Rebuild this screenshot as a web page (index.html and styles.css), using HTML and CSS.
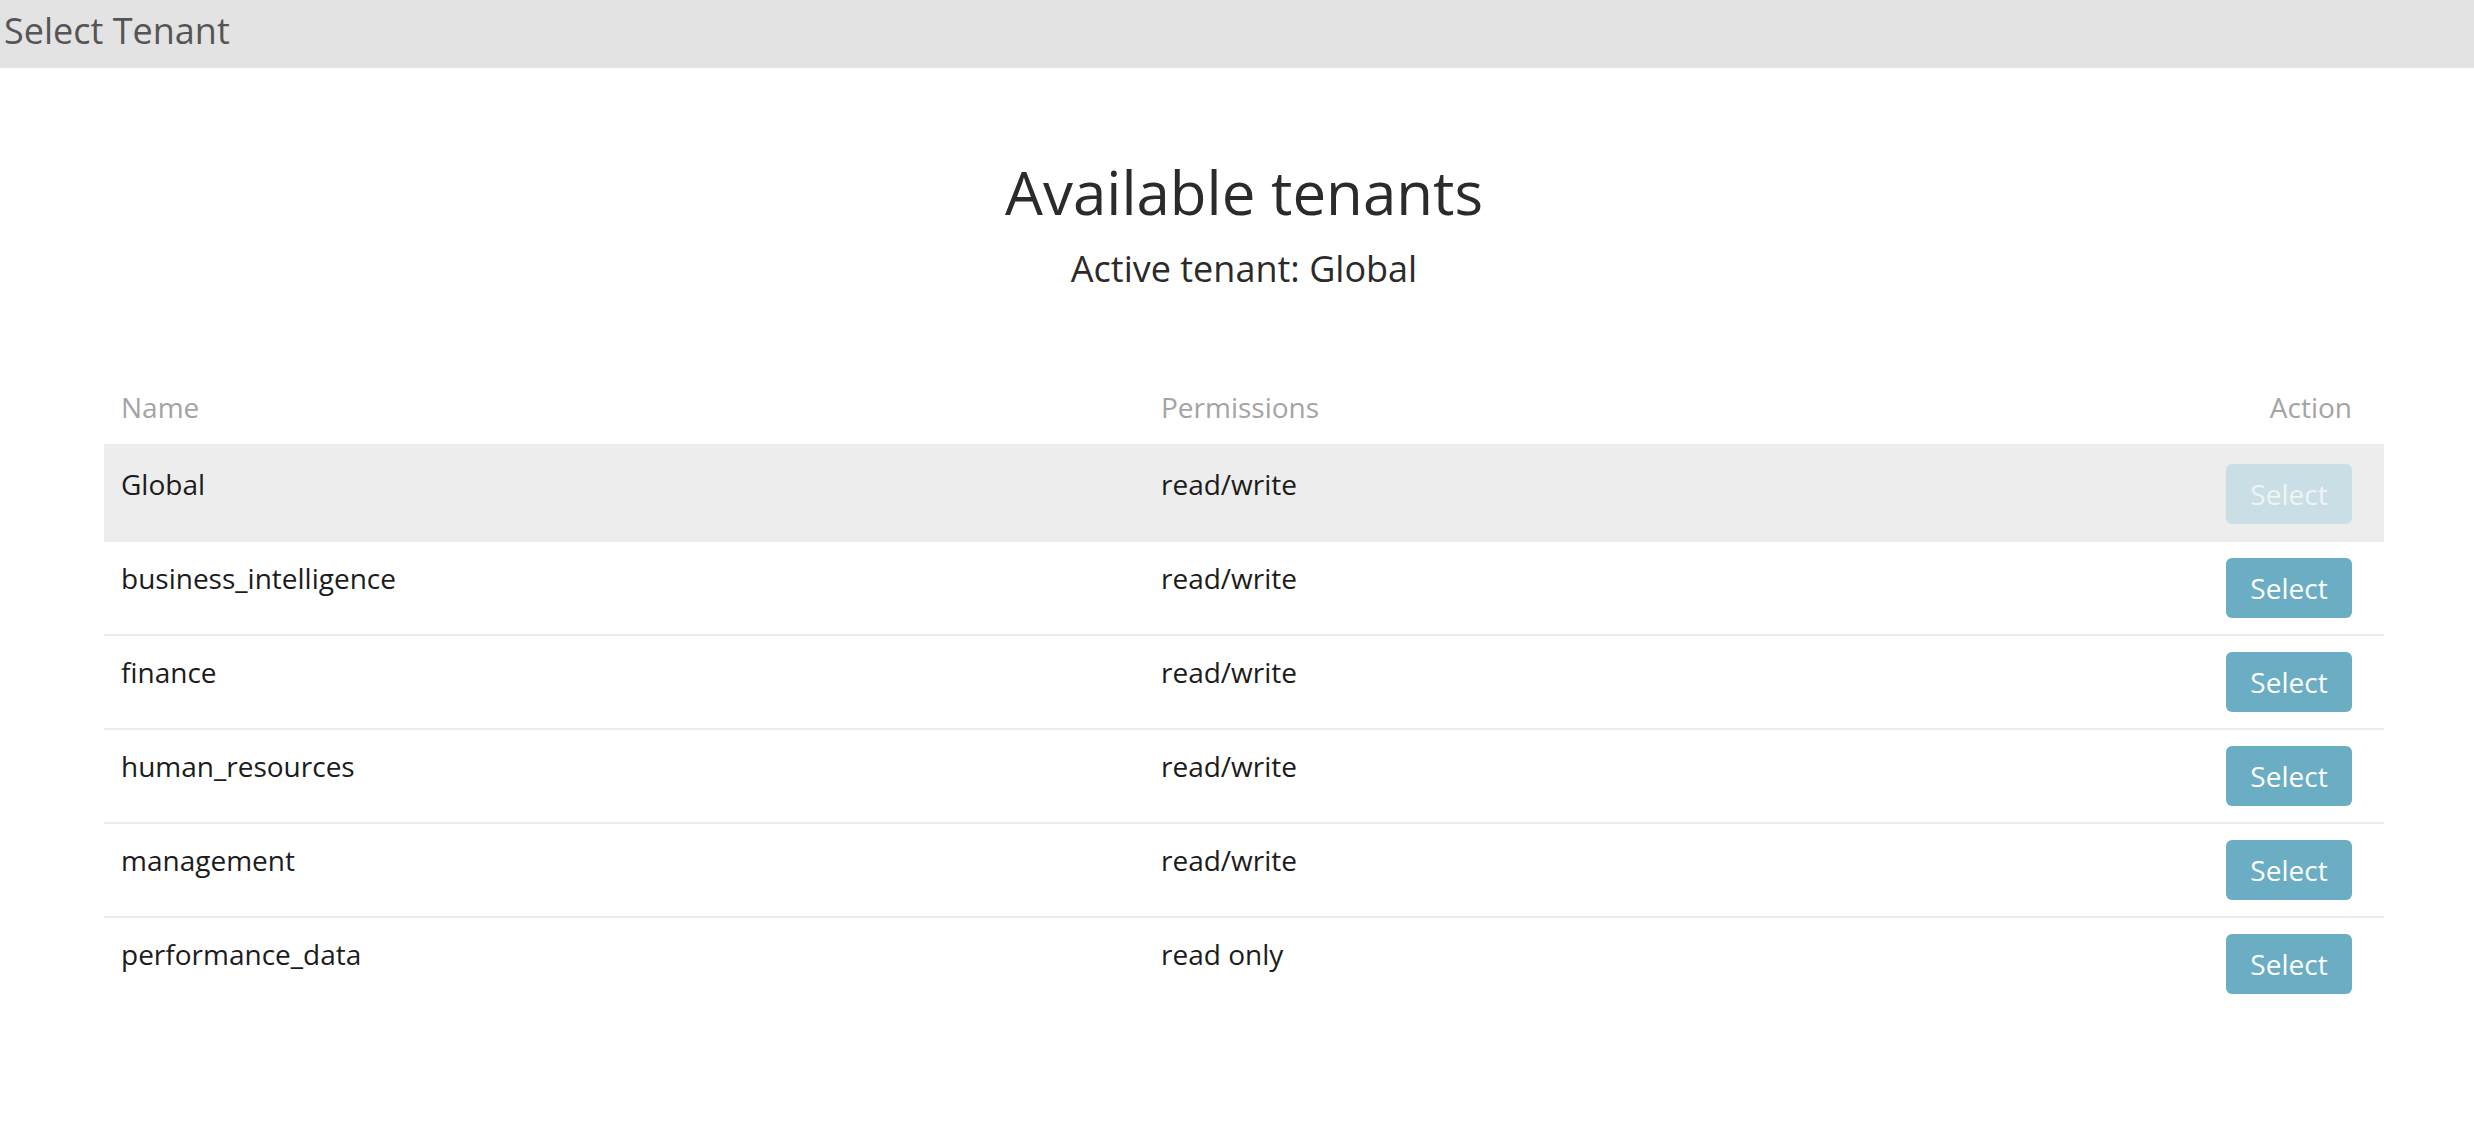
FILE: index.html
```html
<!DOCTYPE html>
<html lang="en">
<head>
<meta charset="utf-8">
<title>Select Tenant</title>
<link rel="stylesheet" href="styles.css">
</head>
<body>
<header class="topbar">
  <span class="topbar-title">Select Tenant</span>
</header>
<main class="content">
  <h1 class="page-title">Available tenants</h1>
  <h2 class="active-tenant">Active tenant: Global</h2>
  <table class="tenants">
    <thead>
      <tr>
        <th class="col-name">Name</th>
        <th class="col-perm">Permissions</th>
        <th class="col-action">Action</th>
      </tr>
    </thead>
    <tbody>
      <tr class="is-active">
        <td>Global</td>
        <td>read/write</td>
        <td class="col-action"><button class="btn btn-disabled" disabled>Select</button></td>
      </tr>
      <tr>
        <td>business_intelligence</td>
        <td>read/write</td>
        <td class="col-action"><button class="btn">Select</button></td>
      </tr>
      <tr>
        <td>finance</td>
        <td>read/write</td>
        <td class="col-action"><button class="btn">Select</button></td>
      </tr>
      <tr>
        <td>human_resources</td>
        <td>read/write</td>
        <td class="col-action"><button class="btn">Select</button></td>
      </tr>
      <tr>
        <td>management</td>
        <td>read/write</td>
        <td class="col-action"><button class="btn">Select</button></td>
      </tr>
      <tr class="last">
        <td>performance_data</td>
        <td>read only</td>
        <td class="col-action"><button class="btn">Select</button></td>
      </tr>
    </tbody>
  </table>
</main>
</body>
</html>
```
FILE: styles.css
```css
html, body {
  margin: 0;
  padding: 0;
  background: #ffffff;
  font-family: "Open Sans", "Noto Sans", sans-serif;
}

.topbar {
  height: 68px;
  background: #e3e3e3;
  padding-left: 4px;
  box-sizing: border-box;
}

.topbar-title {
  display: block;
  font-size: 36px;
  line-height: 62px;
  color: #555555;
}

.content {
  padding: 0 90px 0 104px;
}

.page-title {
  margin: 91px 0 0;
  text-align: center;
  font-size: 60px;
  line-height: 66px;
  font-weight: 400;
  color: #2b2b2b;
}

.active-tenant {
  margin: 24px 0 0;
  text-align: center;
  font-size: 36px;
  line-height: 40px;
  font-weight: 400;
  color: #2b2b2b;
}

.tenants {
  width: 100%;
  margin-top: 82px;
  border-collapse: collapse;
  font-size: 28px;
  line-height: 40px;
  color: #1c1c1c;
}

.tenants th {
  font-weight: 400;
  color: #a4a4a4;
  text-align: left;
  padding: 16px 17px 17px;
}

.tenants .col-name {
  width: 1006px;
}

.tenants th.col-action,
.tenants td.col-action {
  text-align: right;
  padding-right: 32px;
}

.tenants td {
  vertical-align: top;
  padding: 16px 17px;
}

.tenants tbody tr {
  border-bottom: 2px solid #ececec;
}

.tenants tbody tr.last {
  border-bottom: none;
}

.tenants tr.is-active {
  background: #ededed;
  border-bottom-color: #ededed;
}

.tenants tr.is-active td {
  padding-top: 20px;
}

.btn {
  display: inline-block;
  width: 126px;
  height: 60px;
  padding: 0;
  border: none;
  border-radius: 6px;
  background: #6badc2;
  color: #ffffff;
  font-family: "Open Sans", "Noto Sans", sans-serif;
  font-size: 28px;
  line-height: 60px;
  text-align: center;
  vertical-align: top;
}

.btn-disabled {
  background: #cadfe5;
  color: #eef4f6;
}
```
